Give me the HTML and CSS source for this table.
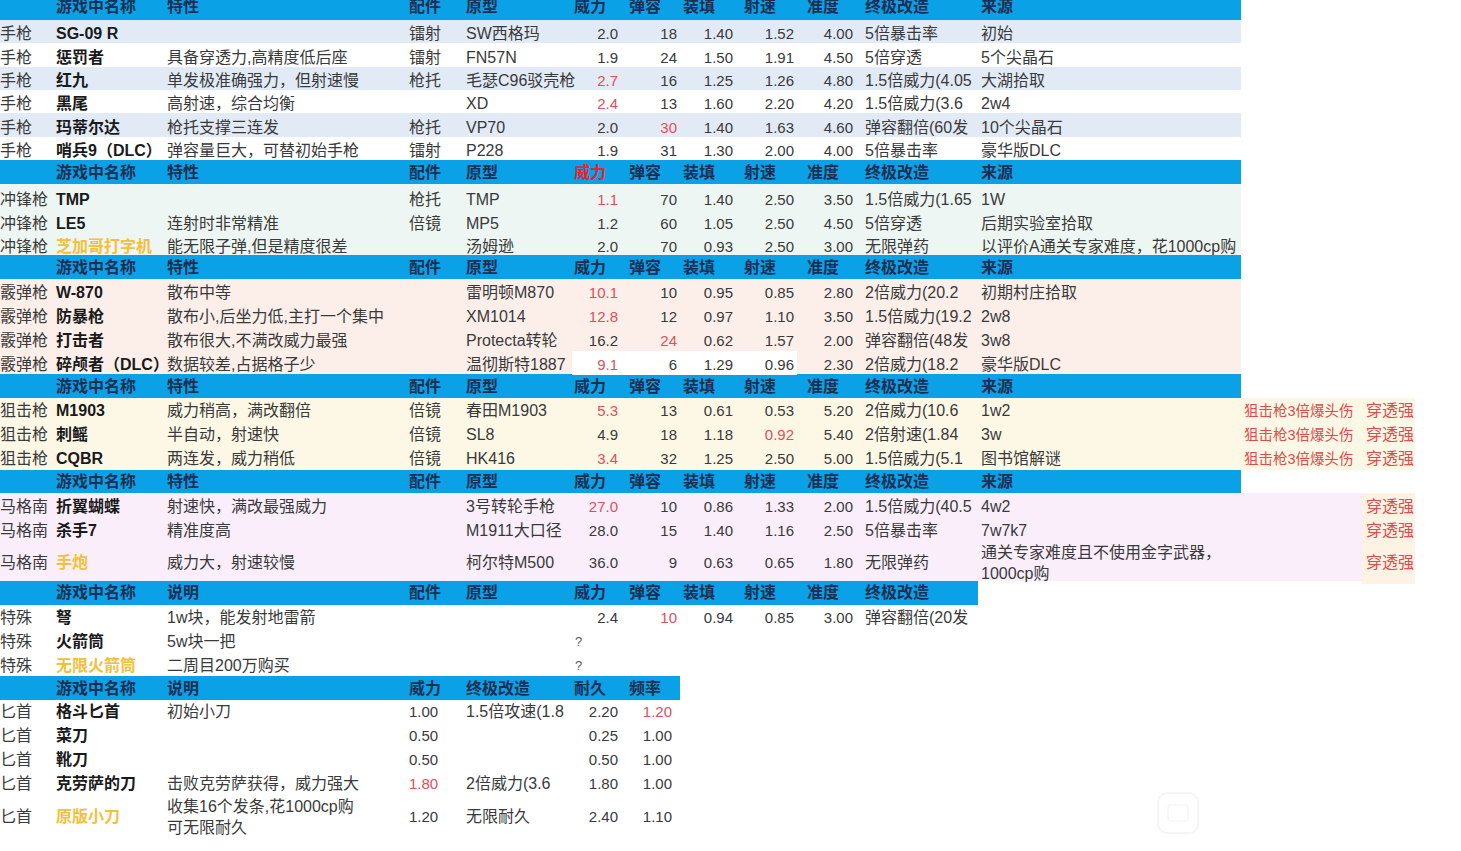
FILE: index.html
```html
<!DOCTYPE html>
<html lang="zh-CN">
<head>
<meta charset="utf-8">
<title>武器数据表</title>
<link rel="stylesheet" href="styles.css">
</head>
<body>
<div class="sheet">

  <div class="row hdr hdr-top">
    <div></div><div>游戏中名称</div><div>特性</div><div>配件</div><div>原型</div><div class="hf">威力</div><div class="hg">弹容</div><div class="hh">装填</div><div class="hi">射速</div><div class="hj">准度</div><div class="hk">终极改造</div><div class="hl">来源</div>
  </div>
  <div class="row pis alt"><div class="a">手枪</div><div class="b">SG-09 R</div><div></div><div>镭射</div><div>SW西格玛</div><div class="n">2.0</div><div class="n">18</div><div class="n">1.40</div><div class="n">1.52</div><div class="n nj">4.00</div><div class="k">5倍暴击率</div><div class="l">初始</div></div>
  <div class="row pis"><div class="a">手枪</div><div class="b">惩罚者</div><div>具备穿透力,高精度低后座</div><div>镭射</div><div>FN57N</div><div class="n">1.9</div><div class="n">24</div><div class="n">1.50</div><div class="n">1.91</div><div class="n nj">4.50</div><div class="k">5倍穿透</div><div class="l">5个尖晶石</div></div>
  <div class="row pis alt"><div class="a">手枪</div><div class="b">红九</div><div>单发极准确强力，但射速慢</div><div>枪托</div><div>毛瑟C96驳壳枪</div><div class="n red">2.7</div><div class="n">16</div><div class="n">1.25</div><div class="n">1.26</div><div class="n nj">4.80</div><div class="k">1.5倍威力(4.05</div><div class="l">大湖拾取</div></div>
  <div class="row pis"><div class="a">手枪</div><div class="b">黑尾</div><div>高射速，综合均衡</div><div></div><div>XD</div><div class="n red">2.4</div><div class="n">13</div><div class="n">1.60</div><div class="n">2.20</div><div class="n nj">4.20</div><div class="k">1.5倍威力(3.6</div><div class="l">2w4</div></div>
  <div class="row pis alt"><div class="a">手枪</div><div class="b">玛蒂尔达</div><div>枪托支撑三连发</div><div>枪托</div><div>VP70</div><div class="n">2.0</div><div class="n red">30</div><div class="n">1.40</div><div class="n">1.63</div><div class="n nj">4.60</div><div class="k">弹容翻倍(60发</div><div class="l">10个尖晶石</div></div>
  <div class="row pis"><div class="a">手枪</div><div class="b">哨兵9（DLC）</div><div>弹容量巨大，可替初始手枪</div><div>镭射</div><div>P228</div><div class="n">1.9</div><div class="n">31</div><div class="n">1.30</div><div class="n">2.00</div><div class="n nj">4.00</div><div class="k">5倍暴击率</div><div class="l">豪华版DLC</div></div>

  <div class="row hdr">
    <div></div><div>游戏中名称</div><div>特性</div><div>配件</div><div>原型</div><div class="hf hred">威力</div><div class="hg">弹容</div><div class="hh">装填</div><div class="hi">射速</div><div class="hj">准度</div><div class="hk">终极改造</div><div class="hl">来源</div>
  </div>
  <div class="row smg"><div class="a">冲锋枪</div><div class="b">TMP</div><div></div><div>枪托</div><div>TMP</div><div class="n red">1.1</div><div class="n">70</div><div class="n">1.40</div><div class="n">2.50</div><div class="n nj">3.50</div><div class="k">1.5倍威力(1.65</div><div class="l">1W</div></div>
  <div class="row smg"><div class="a">冲锋枪</div><div class="b">LE5</div><div>连射时非常精准</div><div>倍镜</div><div>MP5</div><div class="n">1.2</div><div class="n">60</div><div class="n">1.05</div><div class="n">2.50</div><div class="n nj">4.50</div><div class="k">5倍穿透</div><div class="l">后期实验室拾取</div></div>
  <div class="row smg"><div class="a">冲锋枪</div><div class="b gold">芝加哥打字机</div><div>能无限子弹,但是精度很差</div><div></div><div>汤姆逊</div><div class="n">2.0</div><div class="n">70</div><div class="n">0.93</div><div class="n">2.50</div><div class="n nj">3.00</div><div class="k">无限弹药</div><div class="l">以评价A通关专家难度，花1000cp购</div></div>

  <div class="row hdr">
    <div></div><div>游戏中名称</div><div>特性</div><div>配件</div><div>原型</div><div class="hf">威力</div><div class="hg">弹容</div><div class="hh">装填</div><div class="hi">射速</div><div class="hj">准度</div><div class="hk">终极改造</div><div class="hl">来源</div>
  </div>
  <div class="row sg"><div class="a">霰弹枪</div><div class="b">W-870</div><div>散布中等</div><div></div><div>雷明顿M870</div><div class="n red">10.1</div><div class="n">10</div><div class="n">0.95</div><div class="n">0.85</div><div class="n nj">2.80</div><div class="k">2倍威力(20.2</div><div class="l">初期村庄拾取</div></div>
  <div class="row sg"><div class="a">霰弹枪</div><div class="b">防暴枪</div><div>散布小,后坐力低,主打一个集中</div><div></div><div>XM1014</div><div class="n red">12.8</div><div class="n">12</div><div class="n">0.97</div><div class="n">1.10</div><div class="n nj">3.50</div><div class="k">1.5倍威力(19.2</div><div class="l">2w8</div></div>
  <div class="row sg"><div class="a">霰弹枪</div><div class="b">打击者</div><div>散布很大,不满改威力最强</div><div></div><div>Protecta转轮</div><div class="n">16.2</div><div class="n red">24</div><div class="n">0.62</div><div class="n">1.57</div><div class="n nj">2.00</div><div class="k">弹容翻倍(48发</div><div class="l">3w8</div></div>
  <div class="row sg"><div class="a">霰弹枪</div><div class="b">碎颅者（DLC）</div><div>数据较差,占据格子少</div><div></div><div>温彻斯特1887</div><div class="n red wc">9.1</div><div class="n wc">6</div><div class="n wc">1.29</div><div class="n wc">0.96</div><div class="n nj">2.30</div><div class="k">2倍威力(18.2</div><div class="l">豪华版DLC</div></div>

  <div class="row hdr">
    <div></div><div>游戏中名称</div><div>特性</div><div>配件</div><div>原型</div><div class="hf">威力</div><div class="hg">弹容</div><div class="hh">装填</div><div class="hi">射速</div><div class="hj">准度</div><div class="hk">终极改造</div><div class="hl">来源</div>
  </div>
  <div class="row sn"><div class="a">狙击枪</div><div class="b">M1903</div><div>威力稍高，满改翻倍</div><div>倍镜</div><div>春田M1903</div><div class="n red">5.3</div><div class="n">13</div><div class="n">0.61</div><div class="n">0.53</div><div class="n nj">5.20</div><div class="k">2倍威力(10.6</div><div class="l">1w2</div><div class="m note">狙击枪3倍爆头伤</div><div class="x note">穿透强</div></div>
  <div class="row sn"><div class="a">狙击枪</div><div class="b">刺鳐</div><div>半自动，射速快</div><div>倍镜</div><div>SL8</div><div class="n">4.9</div><div class="n">18</div><div class="n">1.18</div><div class="n red">0.92</div><div class="n nj">5.40</div><div class="k">2倍射速(1.84</div><div class="l">3w</div><div class="m note">狙击枪3倍爆头伤</div><div class="x note">穿透强</div></div>
  <div class="row sn"><div class="a">狙击枪</div><div class="b">CQBR</div><div>两连发，威力稍低</div><div>倍镜</div><div>HK416</div><div class="n red">3.4</div><div class="n">32</div><div class="n">1.25</div><div class="n">2.50</div><div class="n nj">5.00</div><div class="k">1.5倍威力(5.1</div><div class="l">图书馆解谜</div><div class="m note">狙击枪3倍爆头伤</div><div class="x note">穿透强</div></div>

  <div class="row hdr">
    <div></div><div>游戏中名称</div><div>特性</div><div>配件</div><div>原型</div><div class="hf">威力</div><div class="hg">弹容</div><div class="hh">装填</div><div class="hi">射速</div><div class="hj">准度</div><div class="hk">终极改造</div><div class="hl">来源</div>
  </div>
  <div class="row mg"><div class="a">马格南</div><div class="b">折翼蝴蝶</div><div>射速快，满改最强威力</div><div></div><div>3号转轮手枪</div><div class="n red">27.0</div><div class="n">10</div><div class="n">0.86</div><div class="n">1.33</div><div class="n nj">2.00</div><div class="k">1.5倍威力(40.5</div><div class="l">4w2</div><div class="m"></div><div class="x note peach">穿透强</div></div>
  <div class="row mg"><div class="a">马格南</div><div class="b">杀手7</div><div>精准度高</div><div></div><div>M1911大口径</div><div class="n">28.0</div><div class="n">15</div><div class="n">1.40</div><div class="n">1.16</div><div class="n nj">2.50</div><div class="k">5倍暴击率</div><div class="l">7w7k7</div><div class="m"></div><div class="x note peach">穿透强</div></div>
  <div class="row mg tall"><div class="a">马格南</div><div class="b gold">手炮</div><div>威力大，射速较慢</div><div></div><div>柯尔特M500</div><div class="n">36.0</div><div class="n">9</div><div class="n">0.63</div><div class="n">0.65</div><div class="n nj">1.80</div><div class="k">无限弹药</div><div class="l"><span class="ml">通关专家难度且不使用金字武器，<br>1000cp购</span></div><div class="m"></div><div class="x note peach">穿透强</div></div>

  <div class="row hdr hdr-sp">
    <div></div><div>游戏中名称</div><div>说明</div><div>配件</div><div>原型</div><div class="hf">威力</div><div class="hg">弹容</div><div class="hh">装填</div><div class="hi">射速</div><div class="hj">准度</div><div class="hk">终极改造</div>
  </div>
  <div class="row sp"><div class="a">特殊</div><div class="b">弩</div><div>1w块，能发射地雷箭</div><div></div><div></div><div class="n">2.4</div><div class="n red">10</div><div class="n">0.94</div><div class="n">0.85</div><div class="n nj">3.00</div><div class="k">弹容翻倍(20发</div></div>
  <div class="row sp"><div class="a">特殊</div><div class="b">火箭筒</div><div>5w块一把</div><div></div><div></div><div class="q">?</div></div>
  <div class="row sp"><div class="a">特殊</div><div class="b gold">无限火箭筒</div><div>二周目200万购买</div><div></div><div></div><div class="q">?</div></div>

  <div class="row hdr hdr-kn">
    <div></div><div>游戏中名称</div><div>说明</div><div>威力</div><div>终极改造</div><div class="hf">耐久</div><div class="hg">频率</div>
  </div>
  <div class="row kn"><div class="a">匕首</div><div class="b">格斗匕首</div><div>初始小刀</div><div class="num">1.00</div><div>1.5倍攻速(1.8</div><div class="n">2.20</div><div class="n nk red">1.20</div></div>
  <div class="row kn"><div class="a">匕首</div><div class="b">菜刀</div><div></div><div class="num">0.50</div><div></div><div class="n">0.25</div><div class="n nk">1.00</div></div>
  <div class="row kn"><div class="a">匕首</div><div class="b">靴刀</div><div></div><div class="num">0.50</div><div></div><div class="n">0.50</div><div class="n nk">1.00</div></div>
  <div class="row kn"><div class="a">匕首</div><div class="b">克劳萨的刀</div><div>击败克劳萨获得，威力强大</div><div class="num red">1.80</div><div>2倍威力(3.6</div><div class="n">1.80</div><div class="n nk">1.00</div></div>
  <div class="row kn tall"><div class="a">匕首</div><div class="b gold">原版小刀</div><div><span class="ml">收集16个发条,花1000cp购<br>可无限耐久</span></div><div class="num">1.20</div><div>无限耐久</div><div class="n">2.40</div><div class="n nk">1.10</div></div>

</div>

<div class="watermark" aria-hidden="true">
  <svg width="46" height="46" viewBox="0 0 46 46">
    <rect x="3" y="3" width="40" height="40" rx="9" fill="none" stroke="#f5f5f5" stroke-width="2"/>
    <rect x="13" y="15" width="20" height="16" rx="3" fill="none" stroke="#f6f6f6" stroke-width="1.5"/>
  </svg>
</div>
</body>
</html>
```

FILE: styles.css
```css
* { box-sizing: border-box; }

html, body {
  margin: 0;
  padding: 0;
  background: #ffffff;
}

body {
  width: 1461px;
  height: 851px;
  overflow: hidden;
  position: relative;
  font-family: "Liberation Sans", "Noto Sans CJK SC", sans-serif;
  font-size: 16px;
  color: #3a3a3a;
}

.sheet {
  margin-top: -6.3px;
}

.row {
  --bg: transparent;
  --bw: 1241px;
  --pt: 3px;
  display: grid;
  grid-template-columns: 54px 111px 242px 57px 108px 49px 59px 56px 61px 65px 116px 263px 121px 53px;
  height: 23.8px;
  white-space: nowrap;
  background: linear-gradient(var(--bg), var(--bg)) 0 0 / var(--bw) 100% no-repeat;
}

.row > div {
  display: flex;
  align-items: center;
  padding-left: 2px;
  padding-top: var(--pt);
  min-width: 0;
  line-height: 20px;
}

.row.tall { height: 40px; --pt: 1px; }

.ml {
  display: block;
  line-height: 21px;
  white-space: nowrap;
}

/* header bars */
.hdr {
  --bg: #0ba1e6;
  --pt: 1px;
  font-weight: 700;
  color: #1b2f52;
}
.hdr-top { height: 26.2px; }
.hdr-sp { --bw: 978px; }
.hdr-kn { --bw: 680px; }
.hdr .hf { padding-left: 2px; }
.hdr .hg { padding-left: 8px; }
.hdr .hh { padding-left: 3px; }
.hdr .hi { padding-left: 8px; }
.hdr .hj { padding-left: 10px; }
.hdr .hk { padding-left: 3px; }
.hdr .hl { padding-left: 3px; }
.hdr .hred { color: #e5252d; }

/* section backgrounds and vertical text offsets */
.pis { height: 23.4px; --pt: 4.4px; }
.pis.alt { --bg: #e2eaf6; }
.smg { --bg: #eef6f3; --pt: 5.8px; }
.sg { --bg: #fcefea; --pt: 4.2px; }
.sn { --bg: #fdf8e6; --bw: 1415px; --pt: 2.4px; }
.mg { --bg: #fbeefb; --bw: 1362px; --pt: 3px; }
.sp { --pt: 3.4px; }
.kn { --pt: 1.2px; }
.row.mg.tall, .row.kn.tall { --pt: 1px; }

.wc { background: #ffffff; }
.peach { background: #fdf2e3; }

/* cells */
.a { padding-left: 0 !important; }
.b { font-weight: 700; color: #1a1a1a; }
.n {
  justify-content: flex-end;
  padding-left: 0 !important;
  padding-right: 3px;
  font-size: 15px;
}
.num { font-size: 15px; }
.nj { padding-right: 9px; }
.nk { padding-right: 8px; }
.k { padding-left: 3px !important; }
.l { padding-left: 3px !important; }
.m { padding-left: 3px !important; font-size: 14.5px; }
.x { padding-left: 4px !important; }
.q { padding-left: 3px !important; font-size: 13px; color: #555; }

.red { color: #e0505a; }
.gold { color: #f3c03a; }
.note { color: #e5484a; }

.watermark {
  position: absolute;
  left: 1155px;
  top: 790px;
  width: 46px;
  height: 46px;
}
```
